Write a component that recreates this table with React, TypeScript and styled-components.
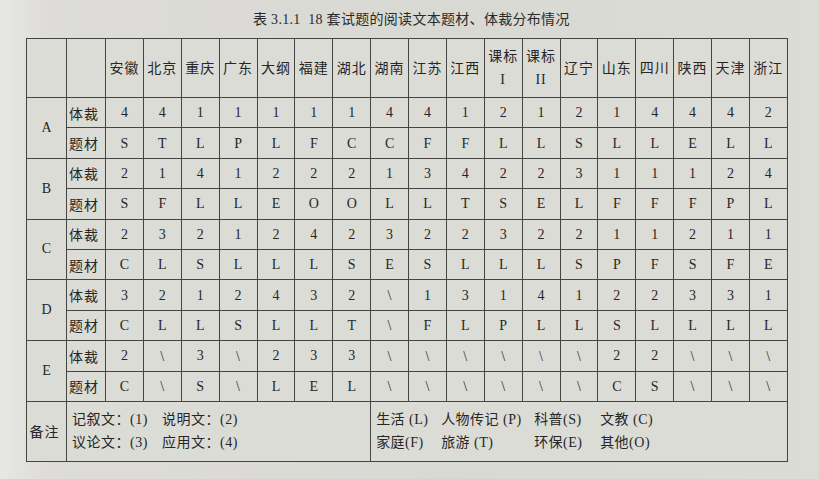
import React from 'react';
import styled, { createGlobalStyle } from 'styled-components';

const GlobalStyle = createGlobalStyle`
  html, body {
    margin: 0;
    padding: 0;
    width: 819px;
    height: 479px;
    overflow: hidden;
  }
  body {
    background: linear-gradient(90deg, #e7e7e3 0%, #dddcd8 6%, #d9d9d4 55%, #dcdcd7 100%);
    color: #262626;
    font-family: "Liberation Serif", "Noto Sans CJK SC", serif;
  }
`;

const Page = styled.div`
  display: flex;
  flex-direction: column;
  align-items: flex-start;
  padding: 11px 0 0 26px;
`;

const Title = styled.div`
  align-self: stretch;
  padding-left: 227px;
  height: 27px;
  font-size: 14px;
  line-height: 18px;
  letter-spacing: 0.3px;
  color: #2a2a2a;
`;

const Table = styled.table`
  border-collapse: collapse;
  table-layout: fixed;
  width: 761px;
  border: 1.5px solid #3d3d3b;
  background: #dcdcd7;
`;

const Row = styled.tr<{ $h: number }>`
  height: ${(p) => p.$h}px;
`;

const Cell = styled.td`
  border: 1px solid #454543;
  padding: 0;
  text-align: center;
  vertical-align: middle;
  font-size: 14px;
  color: #262626;
`;

const HeadCell = styled(Cell)`
  line-height: 23px;
  letter-spacing: 1px;
`;

const GroupCell = styled(Cell)`
  font-size: 14px;
`;

const LabelCell = styled(Cell)`
  letter-spacing: 1px;
  padding-right: 4px;
`;

const ValueCell = styled(Cell)<{ $slash?: boolean }>`
  font-size: 14px;
  padding-top: 1px;
  transform: ${(p) => (p.$slash ? 'scaleY(1.05)' : 'none')};
`;

const NoteCell = styled(Cell)`
  text-align: left;
  padding-left: 5px;
`;

const NoteGrid = styled.div<{ $cols: string }>`
  display: grid;
  grid-template-columns: ${(p) => p.$cols};
  row-gap: 5px;
  font-size: 14px;
  line-height: 18px;
  letter-spacing: 0.5px;
  white-space: nowrap;
`;

const cols = [
  ['安徽'], ['北京'], ['重庆'], ['广东'], ['大纲'], ['福建'], ['湖北'], ['湖南'], ['江苏'],
  ['江西'], ['课标', 'I'], ['课标', 'II'], ['辽宁'], ['山东'], ['四川'], ['陕西'], ['天津'], ['浙江'],
];

const groups: { name: string; genre: string; topic: string }[] = [
  { name: 'A', genre: '4 4 1 1 1 1 1 4 4 1 2 1 2 1 4 4 4 2', topic: 'S T L P L F C C F F L L S L L E L L' },
  { name: 'B', genre: '2 1 4 1 2 2 2 1 3 4 2 2 3 1 1 1 2 4', topic: 'S F L L E O O L L T S E L F F F P L' },
  { name: 'C', genre: '2 3 2 1 2 4 2 3 2 2 3 2 2 1 1 2 1 1', topic: 'C L S L L L S E S L L L S P F S F E' },
  { name: 'D', genre: '3 2 1 2 4 3 2 \\ 1 3 1 4 1 2 2 3 3 1', topic: 'C L L S L L T \\ F L P L L S L L L L' },
  { name: 'E', genre: '2 \\ 3 \\ 2 3 3 \\ \\ \\ \\ \\ \\ 2 2 \\ \\ \\', topic: 'C \\ S \\ L E L \\ \\ \\ \\ \\ \\ C S \\ \\ \\' },
];

const Values = ({ data }: { data: string }) => (
  <>
    {data.split(' ').map((v, i) => (
      <ValueCell key={i} $slash={v === '\\'}>{v}</ValueCell>
    ))}
  </>
);

export default function App() {
  return (
    <>
      <GlobalStyle />
      <Page>
        <Title>表 3.1.1&nbsp; 18 套试题的阅读文本题材、体裁分布情况</Title>
        <Table>
          <colgroup>
            <col style={{ width: 40 }} />
            <col style={{ width: 39 }} />
            {cols.map((_, i) => (
              <col key={i} style={{ width: 37.88 }} />
            ))}
          </colgroup>
          <tbody>
            <Row $h={59}>
              <Cell />
              <Cell />
              {cols.map((c, i) => (
                <HeadCell key={i}>
                  {c[0]}
                  {c[1] && (
                    <>
                      <br />
                      {c[1]}
                    </>
                  )}
                </HeadCell>
              ))}
            </Row>
            {groups.map((g) => (
              <React.Fragment key={g.name}>
                <Row $h={30.4}>
                  <GroupCell rowSpan={2}>{g.name}</GroupCell>
                  <LabelCell>体裁</LabelCell>
                  <Values data={g.genre} />
                </Row>
                <Row $h={30.4}>
                  <LabelCell>题材</LabelCell>
                  <Values data={g.topic} />
                </Row>
              </React.Fragment>
            ))}
            <Row $h={60}>
              <LabelCell>备注</LabelCell>
              <NoteCell colSpan={8}>
                <NoteGrid $cols="90px auto">
                  <span>记叙文：(1)</span>
                  <span>说明文：(2)</span>
                  <span>议论文：(3)</span>
                  <span>应用文：(4)</span>
                </NoteGrid>
              </NoteCell>
              <NoteCell colSpan={11}>
                <NoteGrid $cols="65px 93px 66px auto">
                  <span>生活 (L)</span>
                  <span>人物传记 (P)</span>
                  <span>科普(S)</span>
                  <span>文教 (C)</span>
                  <span>家庭(F)</span>
                  <span>旅游 (T)</span>
                  <span>环保(E)</span>
                  <span>其他(O)</span>
                </NoteGrid>
              </NoteCell>
            </Row>
          </tbody>
        </Table>
      </Page>
    </>
  );
}
